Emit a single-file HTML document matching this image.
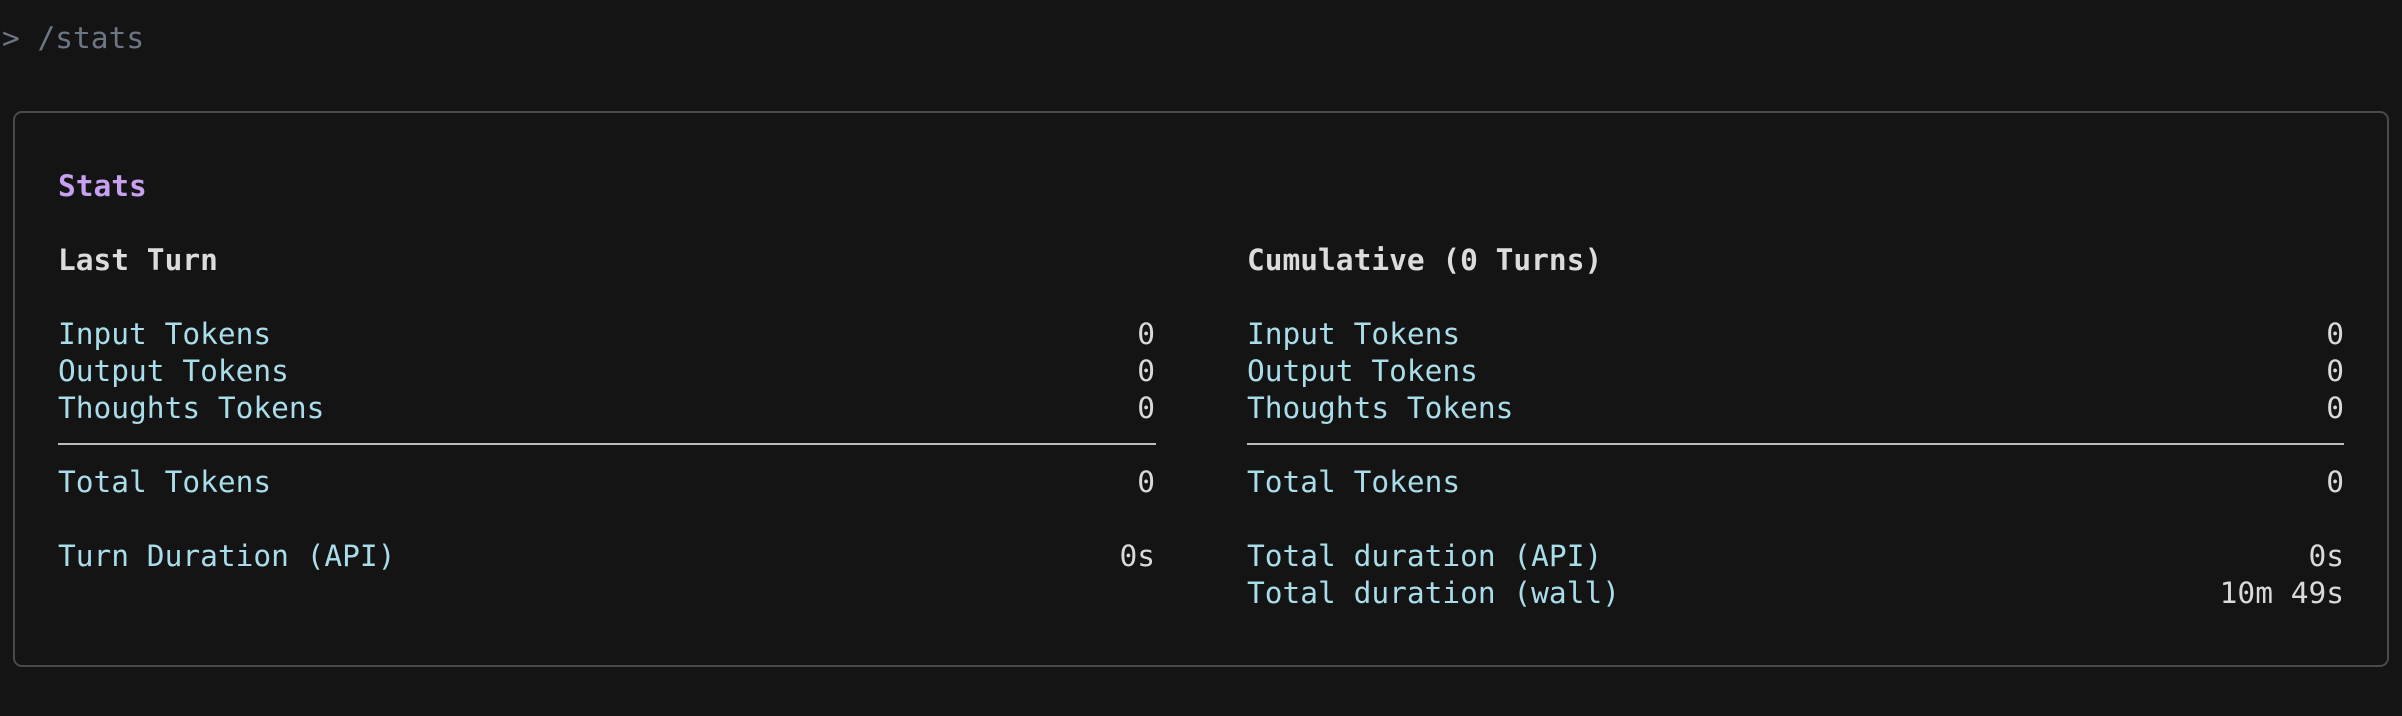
<!DOCTYPE html>
<html><head><meta charset="utf-8"><style>
html,body{margin:0;padding:0;background:#141414;width:2402px;height:716px;overflow:hidden}
body{font-family:"DejaVu Sans Mono","Liberation Mono",monospace;font-size:29.5px;position:relative}
.t{position:absolute;line-height:37px;white-space:pre}
.l{color:#a9dde9}
.v{color:#d9d9d9;text-align:right}
.h{color:#dcdcdc;font-weight:bold}
.box{position:absolute;left:13px;top:111px;width:2376px;height:556px;border:2px solid #4a4a4a;border-radius:9px;box-sizing:border-box}
.hr{position:absolute;height:2px;background:#bdbdbd}
</style></head><body>
<div class="t" style="left:2px;top:20px;color:#6d7784">&gt; /stats</div>
<div class="box"></div>
<div class="t" style="left:58px;top:168px;color:#c7a0ef;font-weight:bold">Stats</div>
<div class="t h" style="left:58px;top:242px">Last Turn</div>
<div class="t h" style="left:1247px;top:242px">Cumulative (0 Turns)</div>

<div class="t l" style="left:58px;top:316px">Input Tokens</div>
<div class="t l" style="left:58px;top:353px">Output Tokens</div>
<div class="t l" style="left:58px;top:390px">Thoughts Tokens</div>
<div class="t v" style="right:1247px;top:316px">0</div>
<div class="t v" style="right:1247px;top:353px">0</div>
<div class="t v" style="right:1247px;top:390px">0</div>
<div class="hr" style="left:58px;width:1098px;top:443px"></div>
<div class="t l" style="left:58px;top:464px">Total Tokens</div>
<div class="t v" style="right:1247px;top:464px">0</div>
<div class="t l" style="left:58px;top:538px">Turn Duration (API)</div>
<div class="t v" style="right:1247px;top:538px">0s</div>

<div class="t l" style="left:1247px;top:316px">Input Tokens</div>
<div class="t l" style="left:1247px;top:353px">Output Tokens</div>
<div class="t l" style="left:1247px;top:390px">Thoughts Tokens</div>
<div class="t v" style="right:58px;top:316px">0</div>
<div class="t v" style="right:58px;top:353px">0</div>
<div class="t v" style="right:58px;top:390px">0</div>
<div class="hr" style="left:1247px;width:1097px;top:443px"></div>
<div class="t l" style="left:1247px;top:464px">Total Tokens</div>
<div class="t v" style="right:58px;top:464px">0</div>
<div class="t l" style="left:1247px;top:538px">Total duration (API)</div>
<div class="t v" style="right:58px;top:538px">0s</div>
<div class="t l" style="left:1247px;top:575px">Total duration (wall)</div>
<div class="t v" style="right:58px;top:575px">10m 49s</div>
</body></html>
